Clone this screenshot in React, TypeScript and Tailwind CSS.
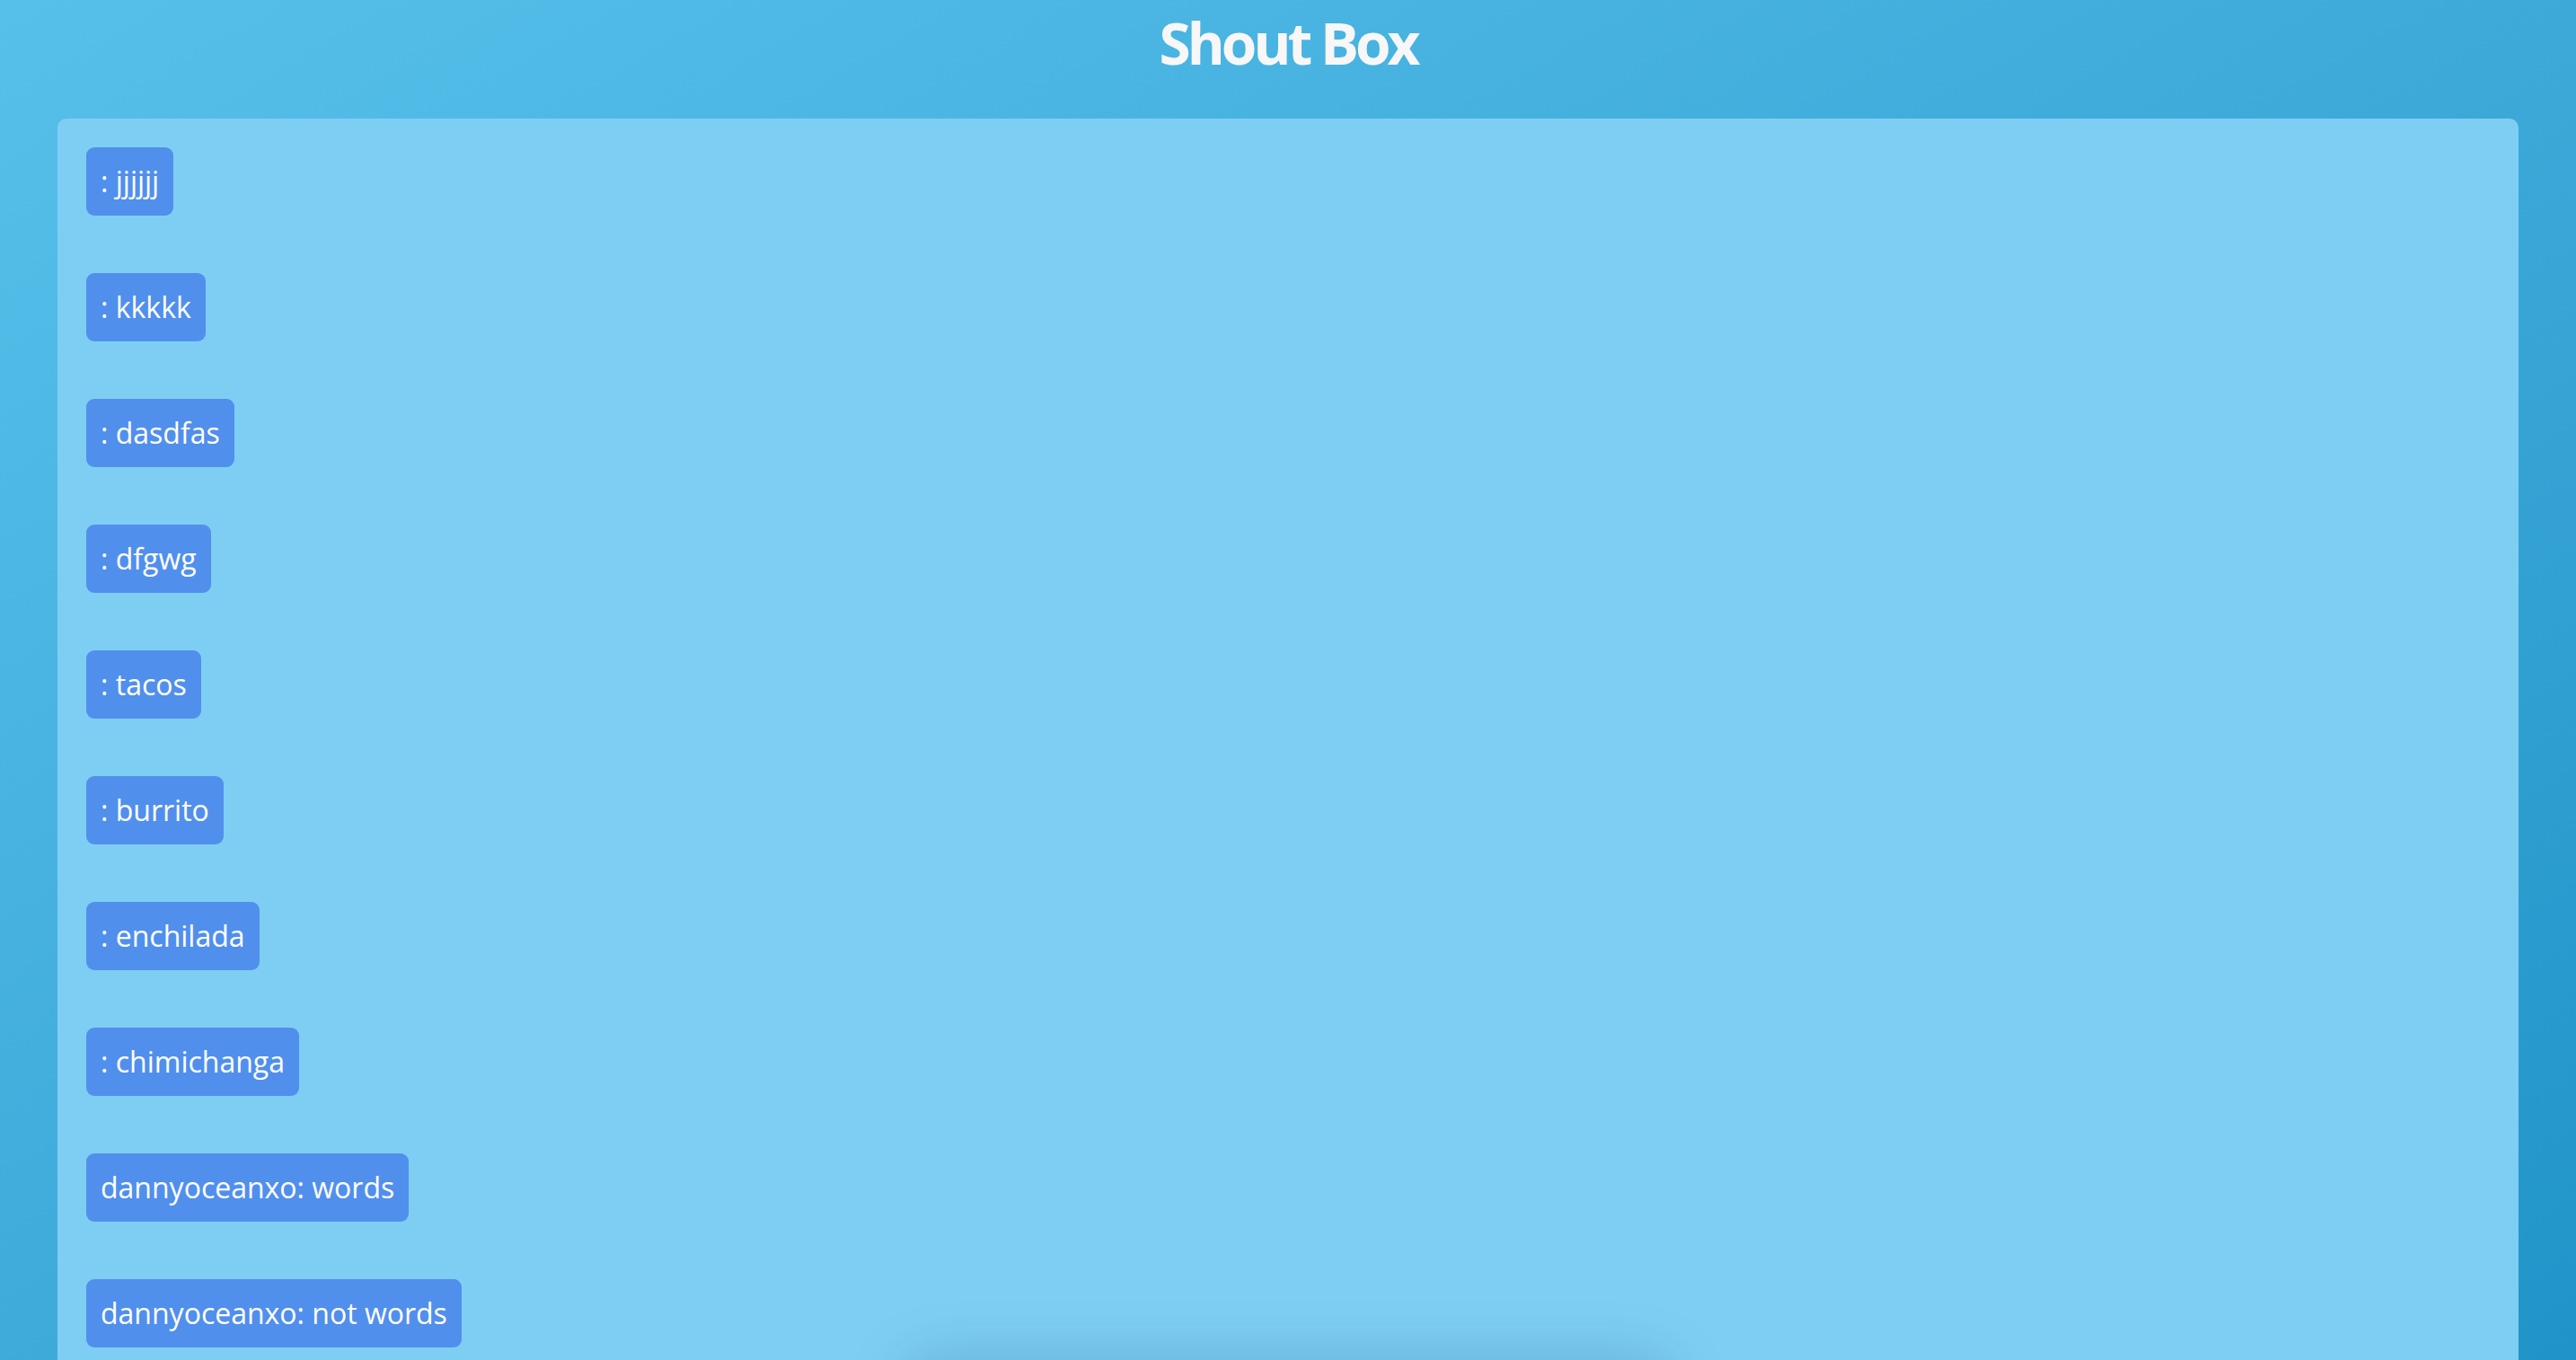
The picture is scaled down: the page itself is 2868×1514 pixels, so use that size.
const messages = [
  { user: '', text: 'jjjjjj' },
  { user: '', text: 'kkkkk' },
  { user: '', text: 'dasdfas' },
  { user: '', text: 'dfgwg' },
  { user: '', text: 'tacos' },
  { user: '', text: 'burrito' },
  { user: '', text: 'enchilada' },
  { user: '', text: 'chimichanga' },
  { user: 'dannyoceanxo', text: 'words' },
  { user: 'dannyoceanxo', text: 'not words' },
];

export default function App() {
  return (
    <div
      className="min-h-screen w-full bg-gradient-to-br from-[#56c0ea] to-[#1e93c8] px-16 text-white"
      style={{ fontFamily: '"Open Sans", "Noto Sans", sans-serif' }}
    >
      {/* Header */}
      <h1 className="mb-9 text-center text-[64px] font-bold leading-[96px] tracking-[-4px] text-[#f7f7f7]">
        Shout Box
      </h1>

      {/* Message list */}
      <div className="rounded-t-[10px] bg-[#7ecef3] p-8 pb-24">
        <div className="flex flex-col items-start gap-16">
          {messages.map((m, i) => (
            <div
              key={i}
              className="rounded-[9px] bg-[#518fed] p-4 text-[32px] leading-[44px] text-white"
            >
              {m.user}: {m.text}
            </div>
          ))}
        </div>
      </div>

      {/* Input bar sitting just below the fold */}
      <div className="fixed left-1/2 top-[1530px] h-[80px] w-[820px] -translate-x-1/2 rounded-lg bg-[#7ecef3] shadow-[0_0_70px_14px_rgba(0,40,80,0.2)]" />
    </div>
  );
}
